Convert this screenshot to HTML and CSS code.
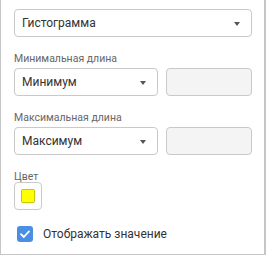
FILE: index.html
```html
<!DOCTYPE html>
<html lang="ru">
<head>
  <meta charset="UTF-8" />
  <title>Гистограмма</title>
  <link rel="stylesheet" href="styles.css">
</head>
<body>
  <div class="panel">
    <div class="select select-wide">
      <span>Гистограмма</span>
      <span class="arrow"></span>
    </div>

    <div class="label">Минимальная длина</div>
    <div class="row">
      <div class="select select-half">
        <span>Минимум</span>
        <span class="arrow"></span>
      </div>
      <div class="input"></div>
    </div>

    <div class="label">Максимальная длина</div>
    <div class="row">
      <div class="select select-half">
        <span>Максимум</span>
        <span class="arrow"></span>
      </div>
      <div class="input"></div>
    </div>

    <div class="label color-label">Цвет</div>
    <div class="color-btn">
      <span class="swatch"></span>
    </div>

    <label class="check-row">
      <span class="checkbox">
        <svg width="12" height="12" viewBox="0 0 12 12">
          <path d="M2 6.2 L4.8 9 L10 3.4" fill="none" stroke="#fff" stroke-width="1.8" stroke-linecap="round" stroke-linejoin="round"/>
        </svg>
      </span>
      <span>Отображать значение</span>
    </label>
  </div>
</body>
</html>
```

FILE: styles.css
```css
body {
  margin: 0;
  font-family: Roboto, "Liberation Sans", sans-serif;
  background: #fff;
}

.panel {
  width: 238px;
  height: 245px;
  padding: 9px 12px 0 13px;
  border: 1px solid #c6c6c6;
  border-top: none;
  border-right-width: 2px;
  border-bottom-width: 1px;
  box-shadow: 0 1px 0 #e2e2e2;
}

.select {
  height: 28px;
  box-sizing: border-box;
  border: 1px solid #c9c9c9;
  border-radius: 4px;
  display: flex;
  align-items: center;
  justify-content: space-between;
  padding: 0 11px 0 7px;
  font-size: 12px;
  color: #333;
  background: #fff;
}

.select-wide {
  width: 238px;
}

.select-half {
  width: 144px;
}

.arrow {
  width: 0;
  height: 0;
  border-left: 3px solid transparent;
  border-right: 3px solid transparent;
  border-top: 4px solid #555;
  margin-top: 1px;
}

.label {
  font-size: 10.5px;
  line-height: 14px;
  color: #666;
  margin: 15px 0 2px 0;
}

.color-label {
  line-height: 10px;
  margin: 17px 0 0 0;
}

.row {
  display: flex;
  gap: 8px;
}

.input {
  width: 86px;
  height: 28px;
  box-sizing: border-box;
  border: 1px solid #c9c9c9;
  border-radius: 4px;
  background: #f4f4f4;
}

.color-btn {
  width: 28px;
  height: 28px;
  box-sizing: border-box;
  border: 1px solid #c9c9c9;
  border-radius: 4px;
  display: flex;
  align-items: center;
  justify-content: center;
}

.swatch {
  width: 14px;
  height: 14px;
  box-sizing: border-box;
  background: #ffff00;
  border: 1px solid #c8c800;
  border-radius: 2px;
}

.check-row {
  display: flex;
  align-items: center;
  gap: 10px;
  margin-top: 16px;
  padding-left: 3px;
  font-size: 12px;
  color: #333;
}

.checkbox {
  width: 16px;
  height: 16px;
  border-radius: 3px;
  background: #4a8fe3;
  display: flex;
  align-items: center;
  justify-content: center;
}
```
